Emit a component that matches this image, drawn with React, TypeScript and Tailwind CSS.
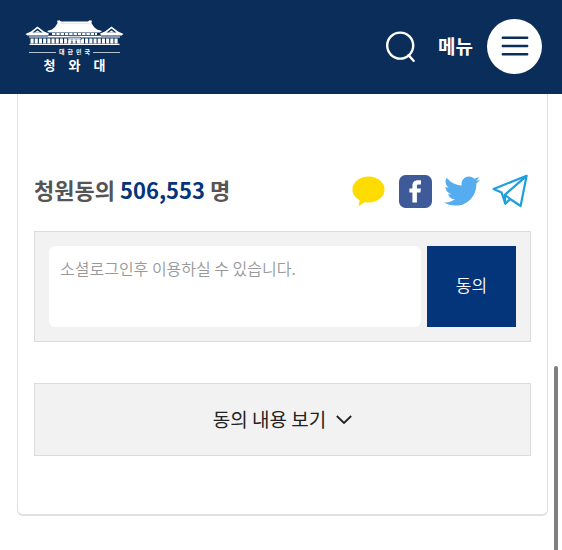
import { FaTwitter } from 'react-icons/fa';

function PalaceMark() {
  return (
    <svg viewBox="0 0 99 27" className="h-[27px] w-[99px]" aria-hidden="true">
      {/* main roof */}
      <path
        d="M32 0.8 L34.5 0.2 L36 1.4 H63 L64.5 0.2 L67 0.8 L66.4 3 L69 7 L72 9.4 L77 11 L75 12.4 H24 L22 11 L27 9.4 L30 7 L32.6 3 Z"
        fill="#fff"
      />
      <path d="M35 3.6 H64" stroke="#b9c6d8" strokeWidth="0.4" />
      {/* side roofs */}
      <path
        d="M0.5 14 L6 11.6 L12.5 6.6 L19 11.6 L24 13.6 L23 15.6 H2.5 Z M98.5 14 L93 11.6 L86.5 6.6 L80 11.6 L75 13.6 L76 15.6 H96.5 Z"
        fill="#fff"
      />
      <path
        d="M7.5 12.6 L12.5 8.6 L17.5 12.6 Z M81.5 12.6 L86.5 8.6 L91.5 12.6 Z"
        fill="#0a2d59"
      />
      <path d="M9.5 12.6 L12.5 10.6 L15.5 12.6 Z M83.5 12.6 L86.5 10.6 L89.5 12.6 Z" fill="#fff" />
      {/* eaves and columns */}
      <path d="M27 14 H72" stroke="#fff" strokeWidth="2.2" strokeDasharray="3.4 0.9" />
      <path d="M23 16.4 H76" stroke="#fff" strokeWidth="1.4" />
      <path d="M4 17 H95" stroke="#fff" strokeWidth="1" />
      <path d="M5.5 21 H93.5" stroke="#fff" strokeWidth="5" strokeDasharray="3.1 1.1" />
      <path d="M4.5 24.4 H94.5" stroke="#fff" strokeWidth="1.2" />
      <path d="M42 19 L44 17.2 H55 L57 19 Z" fill="#fff" stroke="#0a2d59" strokeWidth="0.6" />
      <path d="M44 24 V20 H55 V24" fill="none" stroke="#fff" strokeWidth="1.2" />
    </svg>
  );
}

function Logo() {
  return (
    <a href="#home" className="flex w-[99px] flex-col items-center pt-0.5 text-white">
      <PalaceMark />
      <span className="flex w-full items-center px-1 pt-px text-[6px] leading-[8px] font-bold">
        <span className="h-px flex-1 bg-white/70" />
        <span className="flex gap-[3px] px-[3px]">
          <span>대</span>
          <span>한</span>
          <span>민</span>
          <span>국</span>
        </span>
        <span className="h-px flex-1 bg-white/70" />
      </span>
      <span className="flex gap-[13px] text-[13px] leading-[18px] font-bold">
        <span>청</span>
        <span>와</span>
        <span>대</span>
      </span>
    </a>
  );
}

function Header() {
  return (
    <header className="flex h-[94px] items-center justify-between border-b-2 border-[#0a2d59] bg-[#0a2d59] pr-5 pl-[25px]">
      <Logo />
      <div className="flex items-center">
        <button type="button" aria-label="검색" className="mr-[22px]">
          <svg viewBox="0 0 30 32" className="h-8 w-[30px]" fill="none" stroke="#fff" strokeWidth="2.4">
            <circle cx="14.2" cy="15.6" r="13" />
            <path d="M22.6 25.2 L27.6 30.8" strokeLinecap="round" />
          </svg>
        </button>
        <button type="button" className="flex items-center gap-3.5 text-[19px] font-bold text-white">
          메뉴
          <span className="flex size-[55px] items-center justify-center rounded-full bg-white">
            <svg viewBox="0 0 28 20" className="h-5 w-7" stroke="#0a2d59" strokeWidth="2.4" strokeLinecap="round">
              <path d="M1.8 1.8 H26.2 M1.8 10 H26.2 M1.8 18.2 H26.2" />
            </svg>
          </span>
        </button>
      </div>
    </header>
  );
}

function ShareLinks() {
  return (
    <div className="flex items-center gap-3 pr-[3px]">
      <a href="#kakao" aria-label="카카오톡" className="mr-0.5">
        <svg viewBox="0 0 33 31" className="h-[31px] w-[33px]" fill="#ffdc00">
          <path d="M16.6 0.6 C25.6 0.6 32.6 6.4 32.6 13.6 C32.6 21 25.6 26.6 16.6 26.6 C15.3 26.6 14 26.5 12.8 26.2 L6.4 30.2 L7.6 24.4 C3.2 22 0.4 18.2 0.4 13.6 C0.4 6.4 7.6 0.6 16.6 0.6 Z" />
        </svg>
      </a>
      <a href="#facebook" aria-label="페이스북">
        <svg viewBox="0 0 33 33" className="size-[33px]">
          <rect width="33" height="33" rx="6.5" fill="#3f5a98" />
          <path
            d="M13.4 27.4 V17.6 H10.4 V13.4 H13.4 V10.8 C13.4 7.4 15.4 5.3 18.8 5.3 H22 V9.6 H19.8 C18.4 9.6 17.9 10.2 17.9 11.4 V13.4 H21.9 L21.4 17.6 H17.9 V27.4 Z"
            fill="#fff"
          />
        </svg>
      </a>
      <a href="#twitter" aria-label="트위터">
        <FaTwitter className="size-9 text-[#55acee]" />
      </a>
      <a href="#telegram" aria-label="텔레그램">
        <svg
          viewBox="0 0 36 34"
          className="h-[34px] w-9"
          fill="none"
          stroke="#1f9fdc"
          strokeWidth="2.2"
          strokeLinejoin="round"
        >
          <path d="M34.6 1.8 L1.6 15 L9.6 18.6 L13.4 29.8 L18.2 25 L28.6 32 Z" />
          <path d="M34.6 1.8 L12.8 20.8 L13.4 29.8 M12.8 20.8 L18.2 25" />
        </svg>
      </a>
    </div>
  );
}

export default function App() {
  return (
    <div className="min-h-screen bg-white pb-[34px] font-['Noto_Sans_CJK_KR',sans-serif]">
      <Header />
      <main className="mr-3.5 ml-[17px] rounded-b-md border-x border-b-2 border-[#e0e0e0] px-4 pt-20 pb-[58px]">
        <div className="flex h-[34px] items-center justify-between">
          <h2 className="pb-1 text-[22px] leading-8 font-bold text-[#555]">
            청원동의 <span className="text-[#04357a]">506,553</span> 명
          </h2>
          <ShareLinks />
        </div>

        <form className="mt-[23px] flex gap-1.5 border border-[#dcdcdc] bg-[#f2f2f2] p-3.5">
          <textarea
            aria-label="동의 내용"
            placeholder="소셜로그인후 이용하실 수 있습니다."
            className="h-[81px] min-w-0 flex-1 resize-none rounded-md bg-white px-[11px] py-2.5 text-base leading-6 font-[350] placeholder:text-[#999]"
          />
          <button type="button" className="w-[89px] bg-[#04357a] pb-1 text-[17px] font-[350] text-white">
            동의
          </button>
        </form>

        <button
          type="button"
          className="mt-[41px] flex h-[73px] w-full items-center justify-center gap-2.5 border border-[#dcdcdc] bg-[#f2f2f2] text-[19px] text-[#222]"
        >
          동의 내용 보기
          <svg viewBox="0 0 16 10" className="h-2.5 w-4" fill="none" stroke="#222" strokeWidth="1.8">
            <path d="M0.8 1 L8 8 L15.2 1" />
          </svg>
        </button>
      </main>

      {/* scroll thumb over the page edge */}
      <div className="fixed top-[366px] right-1 bottom-0 w-1 rounded-t-full bg-[#7f7f7f]" />
    </div>
  );
}
